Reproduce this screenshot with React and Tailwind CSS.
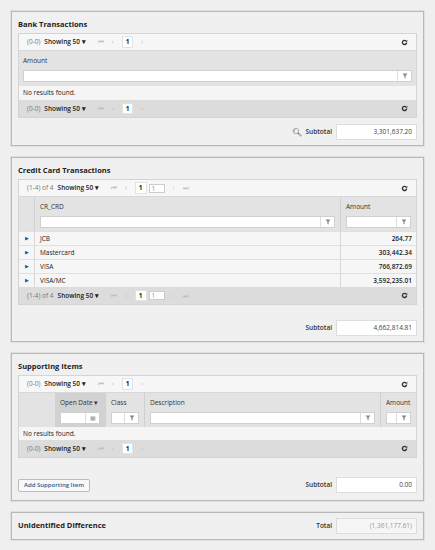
const F = { fontFamily: '"Open Sans", "Liberation Sans", sans-serif' };

function Refresh() {
  return (
    <svg width="7" height="7" viewBox="0 0 10 10"><path d="M8 5a3 3 0 1 1-1-2.3" fill="none" stroke="#333" strokeWidth="2" /><path d="M9 1v3H6z" fill="#333" /></svg>
  );
}
function Funnel() {
  return <svg width="6" height="6" viewBox="0 0 10 10"><path d="M1 1h8L6 5v4L4 8V5z" fill="#888" /></svg>;
}

function Toolbar({ label = "(0-0)", two = false, gray = false }) {
  return (
    <div className={`flex items-center h-[17px] px-2 text-[6.5px] ${gray ? "bg-[#dcdcdc]" : "bg-[#f7f7f7] border-b border-[#d8d8d8]"}`}>
      <span className="text-[#777]">{label}</span>
      <span className="ml-1 text-[#222] font-semibold">Showing 50 ▾</span>
      <span className="ml-3 text-[#bbb]">⏮</span>
      <span className="ml-2 text-[#bbb]">‹</span>
      <span className="ml-2 bg-white px-[3px] font-bold text-[#222] border border-[#e3e3e3]">1</span>
      {two && <span className="ml-[2px] bg-white w-[16px] h-[9px] border border-[#ccc] text-[#999] pl-[2px] leading-[8px]">1</span>}
      <span className="ml-2 text-[#bbb]">›</span>
      {two && <span className="ml-2 text-[#bbb]">⏭</span>}
      <span className="ml-auto"><Refresh /></span>
    </div>
  );
}

function Input({ w, icon = <Funnel /> }) {
  return (
    <div className={`flex h-[12px] bg-white border border-[#d0d0d0] ${w}`}>
      <div className="flex-1" />
      <div className="w-[14px] border-l border-[#ddd] flex items-center justify-center">{icon}</div>
    </div>
  );
}

function Subtotal({ label = "Subtotal", value, search, muted }) {
  return (
    <div className="flex items-center justify-end gap-1 text-[6.5px]">
      {search && <span className="text-[8px]">🔍︎</span>}
      <span className="font-semibold text-[#333]">{label}</span>
      <div className={`w-[81px] h-[16px] flex items-center justify-end pr-1 border border-[#ddd] ${muted ? "bg-[#f6f6f6] text-[#999]" : "bg-white text-[#444]"}`}>{value}</div>
    </div>
  );
}

function Panel({ title, children, pb = "pb-[5px]" }) {
  return (
    <div className={`border border-[#b8b8b8] bg-[#f0f0f0] px-[6px] pt-[7px] ${pb} shadow-[0_0_0_1px_#e0e0e0]`}>
      <div className="text-[7.5px] font-bold text-[#222] mb-[3px]">{title}</div>
      {children}
    </div>
  );
}

export default function App() {
  const rows = [["JCB", "264.77"], ["Mastercard", "303,442.34"], ["VISA", "766,872.69"], ["VISA/MC", "3,592,235.01"]];
  return (
    <div style={F} className="w-[435px] h-[550px] bg-[#efefef] px-[11px] pt-[11px] flex flex-col gap-[11px]">
      <Panel title="Bank Transactions">
        <div className="border border-[#d4d4d4]">
          <Toolbar />
          <div className="bg-[#e3e3e3] px-1 pt-[5px] pb-[4px] text-[6.5px] text-[#333]">
            <div className="mb-[4px]">Amount</div>
            <Input w="w-full" />
          </div>
          <div className="bg-[#f5f5f5] h-[14px] flex items-center px-1 text-[6.5px] text-[#222]">No results found.</div>
          <Toolbar gray />
        </div>
        <div className="mt-[6px]"><Subtotal search value="3,301,637.20" /></div>
      </Panel>

      <Panel title="Credit Card Transactions">
        <div className="border border-[#d4d4d4]">
          <Toolbar label="(1-4) of 4" two />
          <div className="flex bg-[#e3e3e3] text-[6.5px] text-[#333]">
            <div className="w-[15px]" />
            <div className="flex-1 border-l border-[#d0d0d0] px-[5px] pt-[5px] pb-[3px]">
              <div className="mb-[4px]">CR_CRD</div>
              <Input w="w-full" />
            </div>
            <div className="w-[76px] border-l border-[#d0d0d0] px-[5px] pt-[5px] pb-[3px]">
              <div className="mb-[4px]">Amount</div>
              <Input w="w-full" />
            </div>
          </div>
          {rows.map(([a, b]) => (
            <div key={a} className="flex h-[14px] text-[6.5px] text-[#222] bg-[#f6f6f6] border-t border-[#e0e0e0]">
              <div className="w-[15px] flex items-center justify-center text-[#1e5a9a] text-[5px]">▶</div>
              <div className="flex-1 border-l border-[#d8d8d8] px-[5px] flex items-center">{a}</div>
              <div className="w-[76px] border-l border-[#d8d8d8] px-1 flex items-center justify-end font-semibold">{b}</div>
            </div>
          ))}
          <Toolbar label="(1-4) of 4" two gray />
        </div>
        <div className="mt-[15px]"><Subtotal value="4,662,814.81" /></div>
      </Panel>

      <Panel title="Supporting Items" pb="pb-[7px]">
        <div className="border border-[#d4d4d4]">
          <Toolbar />
          <div className="flex bg-[#e3e3e3] text-[6.5px] text-[#333]">
            <div className="w-[36px]" />
            <div className="w-[50px] bg-[#d2d2d2] px-[5px] pt-[5px] pb-[3px]">
              <div className="mb-[4px]">Open Date ▾</div>
              <Input w="w-[40px]" icon={<span className="text-[#999] text-[6px]">▦</span>} />
            </div>
            <div className="w-[39px] border-l border-[#d0d0d0] px-[5px] pt-[5px] pb-[3px]">
              <div className="mb-[4px]">Class</div>
              <Input w="w-[28px]" />
            </div>
            <div className="flex-1 border-l border-[#d0d0d0] px-[5px] pt-[5px] pb-[3px]">
              <div className="mb-[4px]">Description</div>
              <Input w="w-full" />
            </div>
            <div className="w-[36px] border-l border-[#d0d0d0] px-[5px] pt-[5px] pb-[3px]">
              <div className="mb-[4px]">Amount</div>
              <Input w="w-full" />
            </div>
          </div>
          <div className="bg-[#f5f5f5] h-[13px] flex items-center px-1 text-[6.5px] text-[#222]">No results found.</div>
          <Toolbar gray />
        </div>
        <div className="mt-[19px] flex items-center">
          <div className="border border-[#bbb] bg-[#f8f8f8] rounded-[2px] px-[5px] h-[13px] flex items-center text-[6px] text-[#1b5e96] font-semibold">Add Supporting Item</div>
          <div className="ml-auto"><Subtotal value="0.00" /></div>
        </div>
      </Panel>

      <div className="border border-[#b8b8b8] bg-[#f0f0f0] px-[6px] h-[28px] flex items-center shadow-[0_0_0_1px_#e0e0e0]">
        <div className="text-[7.5px] font-bold text-[#222]">Unidentified Difference</div>
        <div className="ml-auto"><Subtotal label="Total" value="(1,361,177.61)" muted /></div>
      </div>
    </div>
  );
}
